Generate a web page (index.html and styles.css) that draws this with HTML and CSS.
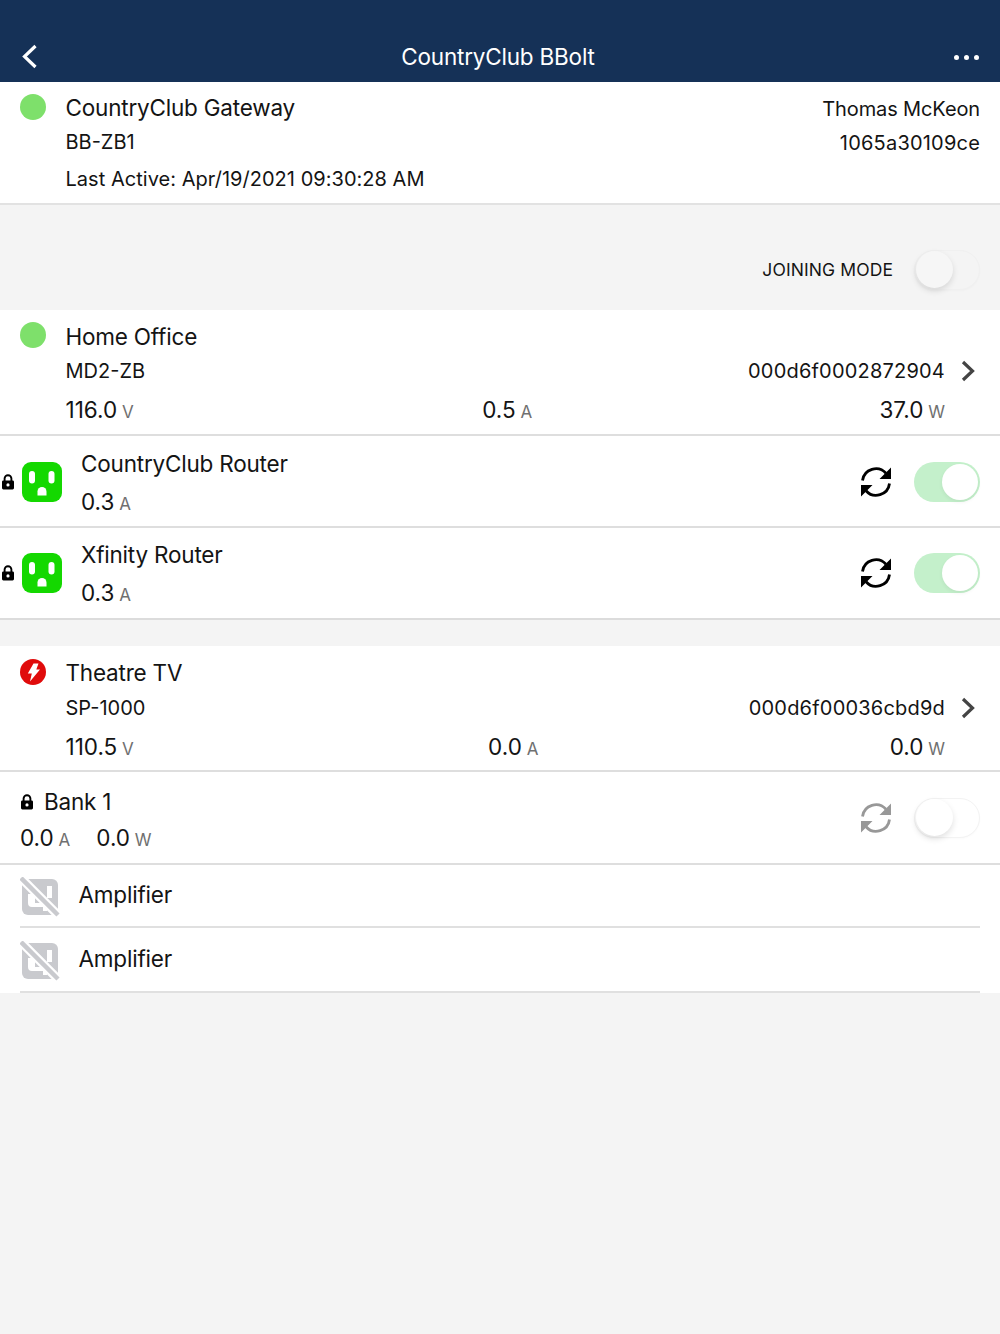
FILE: index.html
```html
<!DOCTYPE html>
<html lang="en">
<head>
<meta charset="utf-8">
<title>CountryClub BBolt</title>
<link rel="stylesheet" href="styles.css">
</head>
<body>
<svg class="defs" width="0" height="0" aria-hidden="true">
  <defs>
    <symbol id="lock" viewBox="0 0 14 16"><path d="M3.6 7V4.6a3.4 3.4 0 0 1 6.8 0V7" fill="none" stroke="currentColor" stroke-width="1.9"/><path fill-rule="evenodd" d="M2.4 6.4h9.2a1.4 1.4 0 0 1 1.4 1.4v6.2a1.4 1.4 0 0 1-1.4 1.4H2.4A1.4 1.4 0 0 1 1 14V7.800a1.400 1.400 0 0 1 1.400-1.400zM7 9.300a1.600 1.600 0 1 0 0 3.200 1.600 1.600 0 0 0 0-3.200z" fill="currentColor"/></symbol>
    <symbol id="outlet" viewBox="0 0 40 40"><rect width="40" height="40" rx="9" fill="#14d800"/><rect x="7" y="9" width="6" height="12.500" rx="3" fill="#fff"/><rect x="26.500" y="9" width="6" height="12.500" rx="3" fill="#fff"/><path d="M15.500 33.500v-4a4.500 4.500 0 0 1 9 0v4z" fill="#fff"/></symbol>
    <symbol id="sync" viewBox="0 0 34 34"><path d="M3.500 15.500A13.500 13.500 0 0 1 27 8.300M30.500 18.500A13.500 13.500 0 0 1 7 25.700" fill="none" stroke="currentColor" stroke-width="2.800"/><path d="M32 2.500V14H20.500zM2 31.500V20h11.500z" fill="currentColor"/></symbol>
    <symbol id="chev" viewBox="0 0 16 24"><path d="M3 3l9.500 9L3 21" fill="none" stroke="currentColor" stroke-width="3.200"/></symbol>
    <symbol id="unplug" viewBox="0 0 40 40"><rect x="2" y="2" width="36" height="36" rx="6" fill="#c9cace"/><path d="M27 9h5v12h-5zM8 17h7v9h12v8h-4v-4H12a4 4 0 0 1-4-4z" fill="#fff"/><path d="M0 0l40 40" stroke="#fff" stroke-width="9"/><path d="M1 1l37 37" stroke="#c9cace" stroke-width="4.500"/></symbol>
  </defs>
</svg>

<header class="topbar">
  <button class="nav-btn" aria-label="Back">
    <svg width="16" height="26" viewBox="0 0 16 26"><path d="M13.500 2L2.500 12.500l11 10.500" fill="none" stroke="#fff" stroke-width="3.200"/></svg>
  </button>
  <h1 class="title">CountryClub BBolt</h1>
  <div class="dots"><i></i><i></i><i></i></div>
</header>

<section class="gateway">
  <span class="dot"></span>
  <div class="gw-main">
    <div class="name">CountryClub Gateway</div>
    <div class="sub">BB-ZB1</div>
    <div class="sub active">Last Active: Apr/19/2021 09:30:28 AM</div>
  </div>
  <div class="gw-side">
    <div class="sub owner">Thomas McKeon</div>
    <div class="sub hex">1065a30109ce</div>
  </div>
</section>

<div class="joining">
  <span class="join-label">JOINING MODE</span>
  <span class="toggle off band"><i></i></span>
</div>

<section class="device">
  <div class="dev-head">
    <span class="dot"></span>
    <div class="dev-body">
      <div class="name">Home Office</div>
      <div class="line">
        <span class="sub">MD2-ZB</span>
        <span class="sub hex">000d6f0002872904</span>
      </div>
      <div class="stats">
        <span class="val">116.0 <small>V</small></span>
        <span class="val mid">0.5 <small>A</small></span>
        <span class="val">37.0 <small>W</small></span>
      </div>
    </div>
    <svg class="chev"><use href="#chev"/></svg>
  </div>
  <div class="outlet-row">
    <svg class="lock"><use href="#lock"/></svg>
    <svg class="outlet"><use href="#outlet"/></svg>
    <div class="outlet-text">
      <div class="name">CountryClub Router</div>
      <div class="val">0.3 <small>A</small></div>
    </div>
    <svg class="sync"><use href="#sync"/></svg>
    <span class="toggle on"><i></i></span>
  </div>
  <div class="outlet-row last">
    <svg class="lock"><use href="#lock"/></svg>
    <svg class="outlet"><use href="#outlet"/></svg>
    <div class="outlet-text">
      <div class="name">Xfinity Router</div>
      <div class="val">0.3 <small>A</small></div>
    </div>
    <svg class="sync"><use href="#sync"/></svg>
    <span class="toggle on"><i></i></span>
  </div>
</section>

<section class="device second">
  <div class="dev-head">
    <svg class="bolt" viewBox="0 0 26 26"><circle cx="13" cy="13" r="13" fill="#e00b0b"/><path d="M13.500 4.500h5l-2.200 6h3.700L10 22.500l1.800-8H7.800z" fill="#fff"/></svg>
    <div class="dev-body">
      <div class="name">Theatre TV</div>
      <div class="line">
        <span class="sub">SP-1000</span>
        <span class="sub hex">000d6f00036cbd9d</span>
      </div>
      <div class="stats">
        <span class="val">110.5 <small>V</small></span>
        <span class="val mid far">0.0 <small>A</small></span>
        <span class="val">0.0 <small>W</small></span>
      </div>
    </div>
    <svg class="chev"><use href="#chev"/></svg>
  </div>
  <div class="bank">
    <div class="bank-text">
      <div class="bank-name"><svg class="lock small"><use href="#lock"/></svg><span class="name">Bank 1</span></div>
      <div class="bank-vals"><span class="val">0.0 <small>A</small></span><span class="val">0.0 <small>W</small></span></div>
    </div>
    <svg class="sync muted"><use href="#sync"/></svg>
    <span class="toggle off"><i></i></span>
  </div>
  <div class="amp-row">
    <svg class="unplug"><use href="#unplug"/></svg>
    <span class="name">Amplifier</span>
  </div>
  <div class="amp-row tall">
    <svg class="unplug"><use href="#unplug"/></svg>
    <span class="name">Amplifier</span>
  </div>
</section>
</body>
</html>
```
FILE: styles.css
```css
* { box-sizing: border-box; }
html, body { margin: 0; }
body {
  height: 1334px;
  overflow: hidden;
  background: #f4f4f4;
  color: #141414;
  font-family: Inter, "Liberation Sans", sans-serif;
}
.defs { position: absolute; }

.topbar {
  height: 82px;
  background: #153157;
  color: #fff;
  display: flex;
  align-items: flex-end;
  justify-content: space-between;
  padding: 0 21px 12px 22px;
}
.nav-btn { background: none; border: 0; padding: 0; height: 26px; width: 20px; display: flex; align-items: flex-start; }
.title { margin: 0; font-size: 22.500px; font-weight: 400; line-height: 26px; letter-spacing: -.2px; }
.dots { display: flex; gap: 5px; height: 26px; align-items: center; }
.dots i { width: 5px; height: 5px; border-radius: 50%; background: #fff; }

.name { font-size: 22.500px; line-height: 28px; letter-spacing: -.2px; }
.sub { font-size: 20px; line-height: 26px; letter-spacing: 0; }
.sub.hex { letter-spacing: .2px; }
.sub.owner { letter-spacing: -.12px; }
.val { font-size: 22.500px; line-height: 28px; letter-spacing: 0; white-space: nowrap; }
.val small { font-size: 17px; color: #707070; margin-left: -1.500px; }
.dot { width: 26px; height: 26px; border-radius: 50%; background: #7ee06b; flex: none; margin-top: 12px; }

.gateway {
  height: 123px;
  background: #fff;
  border-bottom: 2px solid #e2e2e2;
  display: flex;
  padding: 0 20px;
}
.gw-main { margin-left: 19.500px; padding-top: 12px; flex: 1; }
.gw-main .sub { display: block; margin-top: 7px; }
.gw-main .active { margin-top: 11px; letter-spacing: .03px; }
.gw-side { text-align: right; padding-top: 14px; }
.gw-side .sub { margin-top: 8px; }
.gw-side .owner { margin-top: 0; }

.joining {
  height: 105px;
  display: flex;
  justify-content: flex-end;
  align-items: center;
  gap: 21px;
  padding: 24px 20px 0 0;
}
.join-label { font-size: 17.500px; letter-spacing: .1px; }

.toggle { width: 66px; height: 40px; border-radius: 20px; position: relative; display: block; flex: none; }
.toggle i { position: absolute; top: 2px; width: 36px; height: 36px; border-radius: 50%; background: #fff; }
.toggle.on { background: #c4f0cb; }
.toggle.on i { right: 2px; box-shadow: 0 2px 4px rgba(0,0,0,.06); }
.toggle.off { background: #fff; border: 1px solid #f3f3f3; box-shadow: 0 1px 2px rgba(0,0,0,.02); }
.toggle.off i { left: 1px; top: 0; width: 37px; height: 37px; background: #fff; box-shadow: 0 3px 6px rgba(0,0,0,.12); }
.toggle.band { background: #f4f4f4; border-color: #f0f0f0; }
.toggle.band i { background: #f6f6f6; }

.device { background: #fff; border-bottom: 2px solid #dcdcdc; }
.device.second { background: transparent; border-bottom: 0; margin-top: 26px; }
.device.second > div { background: #fff; }

.dev-head {
  height: 126px;
  display: flex;
  padding: 0 20px;
  border-bottom: 2px solid #dedede;
  position: relative;
}
.bolt { width: 26px; height: 26px; flex: none; margin-top: 13px; }
.dev-body { margin-left: 19.500px; flex: 1; padding: 13px 35px 0 0; }
.line { display: flex; justify-content: space-between; margin-top: 7px; }
.second .line { margin-top: 8px; }
.stats { display: grid; grid-template-columns: 1fr auto 1fr; margin-top: 12px; }
.stats .val:last-child { justify-self: end; }
.stats .mid { margin-left: 4px; }
.stats .mid.far { margin-left: 16px; }
.chev { position: absolute; right: 24px; top: 49px; width: 16px; height: 24px; color: #444; }
.second .chev { top: 50px; }

.outlet-row { height: 92px; display: flex; align-items: center; padding: 2px 20px 0 0; border-bottom: 2px solid #dedede; }
.outlet-row.last { height: 90px; padding-top: 0; border-bottom: 0; }
.lock { width: 14px; height: 16px; flex: none; margin-left: 1px; color: #000; }
.lock.small { margin: 0 10px 0 0; }
.outlet { width: 40px; height: 40px; flex: none; margin-left: 7px; }
.outlet-text { margin-left: 19px; flex: 1; padding-top: 3px; }
.outlet-text .val { display: block; margin-top: 10px; }
.sync { width: 34px; height: 34px; flex: none; margin-right: 21px; color: #000; }
.sync.muted { color: #989898; }

.bank { height: 93px; display: flex; align-items: center; padding: 0 20px; border-bottom: 2px solid #dedede; }
.bank-text { flex: 1; padding-top: 7px; }
.bank-name { display: flex; align-items: center; }
.bank-vals { display: flex; gap: 26px; margin-top: 8px; }

.amp-row { height: 63px; padding-left: 20px; display: flex; align-items: center; gap: 18.500px; position: relative; }
.amp-row.tall { height: 65px; }
.amp-row .name { margin-bottom: 3px; }
.amp-row::after { content: ""; position: absolute; left: 20px; right: 20px; bottom: 0; height: 2px; background: #e0e0e0; }
.unplug { width: 40px; height: 40px; flex: none; }
```
